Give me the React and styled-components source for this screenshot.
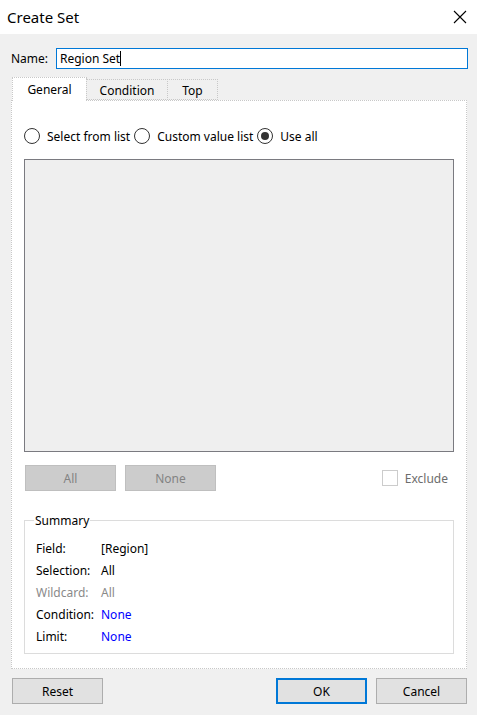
import styled, { createGlobalStyle } from "styled-components";

const GlobalStyle = createGlobalStyle`
  body {
    margin: 0;
    background: #f0f0f0;
    font-family: "Noto Sans", "Open Sans", sans-serif;
    font-size: 12px;
    color: #000;
  }
`;

const Window = styled.div`
  width: 477px;
  height: 715px;
  background: #f0f0f0;
  display: flex;
  flex-direction: column;
  overflow: hidden;
`;

const TitleBar = styled.div`
  height: 34px;
  background: #fff;
  display: flex;
  align-items: center;
  justify-content: space-between;
  padding: 0 10px 0 7px;
  box-sizing: border-box;
`;

const Title = styled.span`
  font-size: 15px;
  color: #000;
`;

const Body = styled.div`
  padding: 14px 9px 0 11px;
  display: flex;
  flex-direction: column;
`;

const NameRow = styled.div`
  display: flex;
  align-items: center;
  height: 21px;
`;

const NameLabel = styled.label`
  width: 45px;
`;

const NameInput = styled.div`
  width: 412px;
  height: 21px;
  box-sizing: border-box;
  border: 1px solid #0078d7;
  background: #fff;
  display: flex;
  align-items: center;
  padding-left: 3px;
`;

const Caret = styled.span`
  display: inline-block;
  width: 1px;
  height: 15px;
  background: #000;
`;

const TabStrip = styled.div`
  display: flex;
  align-items: flex-end;
  margin: 8px 0 0 1px;
  height: 23px;
  position: relative;
  z-index: 1;
`;

const Tab = styled.div`
  width: ${(p) => p.$w}px;
  height: ${(p) => (p.$active ? 24 : 21)}px;
  box-sizing: border-box;
  display: flex;
  align-items: center;
  justify-content: center;
  background: ${(p) => (p.$active ? "#fff" : "#f0f0f0")};
  border: 1px dotted #c8c8c8;
  border-bottom: ${(p) => (p.$active ? "none" : "1px dotted #c8c8c8")};
  margin-left: ${(p) => (p.$first ? 0 : -1)}px;
  margin-bottom: ${(p) => (p.$active ? -1 : 0)}px;
  padding-top: ${(p) => (p.$active ? 0 : 1)}px;
`;

const Panel = styled.div`
  width: 456px;
  height: 569px;
  box-sizing: border-box;
  background: #fff;
  border: 1px dotted #c8c8c8;
  padding: 27px 12px 0 12px;
  display: flex;
  flex-direction: column;
`;

const RadioRow = styled.div`
  display: flex;
  align-items: center;
  height: 16px;
`;

const RadioItem = styled.label`
  display: flex;
  align-items: center;
  gap: 7px;
  margin-right: 4px;
`;

const RadioCircle = styled.span`
  width: 16px;
  height: 16px;
  box-sizing: border-box;
  border: 1px solid #333;
  border-radius: 50%;
  display: flex;
  align-items: center;
  justify-content: center;
  background: #fff;

  &::after {
    content: "";
    width: 8px;
    height: 8px;
    border-radius: 50%;
    background: #333;
    display: ${(p) => (p.$checked ? "block" : "none")};
  }
`;

const ListBox = styled.div`
  margin-top: 15px;
  width: 430px;
  height: 293px;
  box-sizing: border-box;
  background: #efefef;
  border: 1px solid #7a7a80;
`;

const ActionRow = styled.div`
  display: flex;
  align-items: center;
  margin-top: 13px;
  height: 26px;
  padding-left: 1px;
`;

const GrayButton = styled.button`
  width: 91px;
  height: 26px;
  margin-right: 9px;
  font: inherit;
  color: #838383;
  background: #cccccc;
  border: 1px solid #bfbfbf;
  padding: 0;
`;

const ExcludeBox = styled.label`
  margin-left: auto;
  margin-right: 6px;
  display: flex;
  align-items: center;
  gap: 7px;
  color: #6d6d6d;
`;

const CheckSquare = styled.span`
  width: 16px;
  height: 16px;
  box-sizing: border-box;
  border: 1px solid #cccccc;
  background: #fff;
`;

const Summary = styled.fieldset`
  margin: 21px 0 0 0;
  width: 430px;
  height: 142px;
  box-sizing: border-box;
  border: 1px solid #dcdcdc;
  padding: 8px 11px 0 11px;
  display: flex;
  flex-direction: column;
`;

const Legend = styled.legend`
  padding: 0 1px;
  margin-left: -2px;
`;

const SummaryRow = styled.div`
  display: flex;
  height: 22px;
  align-items: center;
  color: ${(p) => (p.$muted ? "#8a8a8a" : "#000")};
`;

const SummaryKey = styled.span`
  width: 65px;
`;

const SummaryValue = styled.span`
  color: ${(p) => (p.$link ? "#0000ff" : "inherit")};
`;

const Footer = styled.div`
  display: flex;
  margin-top: 9px;
  padding-left: 1px;
`;

const DialogButton = styled.button`
  width: 91px;
  height: 26px;
  box-sizing: border-box;
  font: inherit;
  color: #000;
  background: #e1e1e1;
  border: ${(p) => (p.$default ? "2px solid #0078d7" : "1px solid #adadad")};
  padding: 0;
  margin-left: ${(p) => p.$ml || 0}px;
`;

const CloseIcon = () => (
  <svg width="14" height="14" viewBox="0 0 14 14">
    <path d="M1 1 L13 13 M13 1 L1 13" stroke="#000" strokeWidth="1.1" fill="none" />
  </svg>
);

const summaryRows = [
  { key: "Field:", value: "[Region]" },
  { key: "Selection:", value: "All" },
  { key: "Wildcard:", value: "All", muted: true },
  { key: "Condition:", value: "None", link: true },
  { key: "Limit:", value: "None", link: true },
];

const App = () => {
  return (
    <Window>
      <GlobalStyle />
      <TitleBar>
        <Title>Create Set</Title>
        <CloseIcon />
      </TitleBar>
      <Body>
        <NameRow>
          <NameLabel>Name:</NameLabel>
          <NameInput>
            Region Set
            <Caret />
          </NameInput>
        </NameRow>
        <TabStrip>
          <Tab $w={75} $active $first>General</Tab>
          <Tab $w={82}>Condition</Tab>
          <Tab $w={51}>Top</Tab>
        </TabStrip>
        <Panel>
          <RadioRow>
            <RadioItem>
              <RadioCircle />
              Select from list
            </RadioItem>
            <RadioItem>
              <RadioCircle />
              Custom value list
            </RadioItem>
            <RadioItem>
              <RadioCircle $checked />
              Use all
            </RadioItem>
          </RadioRow>
          <ListBox />
          <ActionRow>
            <GrayButton>All</GrayButton>
            <GrayButton>None</GrayButton>
            <ExcludeBox>
              <CheckSquare />
              Exclude
            </ExcludeBox>
          </ActionRow>
          <Summary>
            <Legend>Summary</Legend>
            {summaryRows.map((row) => (
              <SummaryRow key={row.key} $muted={row.muted}>
                <SummaryKey>{row.key}</SummaryKey>
                <SummaryValue $link={row.link}>{row.value}</SummaryValue>
              </SummaryRow>
            ))}
          </Summary>
        </Panel>
        <Footer>
          <DialogButton>Reset</DialogButton>
          <DialogButton $default $ml={173}>OK</DialogButton>
          <DialogButton $ml={9}>Cancel</DialogButton>
        </Footer>
      </Body>
    </Window>
  );
};

export default App;
